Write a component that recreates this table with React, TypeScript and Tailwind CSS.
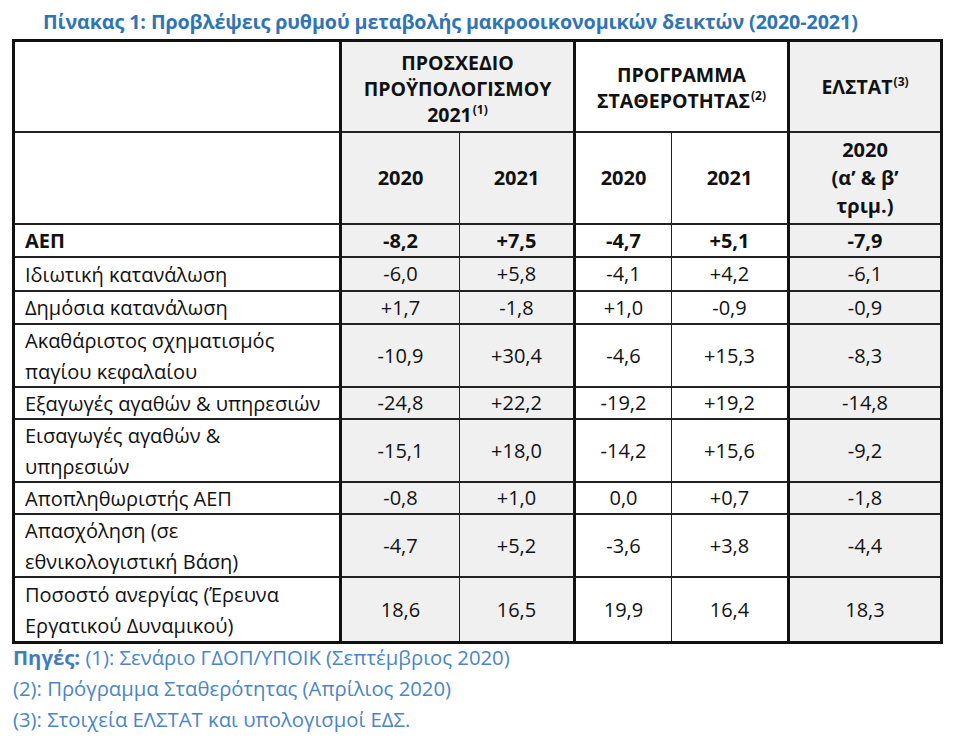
import React from "react";

type Row = { label: string[]; values: string[]; bold?: boolean; h: string };

const rows: Row[] = [
  { label: ["ΑΕΠ"], values: ["-8,2", "+7,5", "-4,7", "+5,1", "-7,9"], bold: true, h: "h-[33px]" },
  { label: ["Ιδιωτική κατανάλωση"], values: ["-6,0", "+5,8", "-4,1", "+4,2", "-6,1"], h: "h-[34px]" },
  { label: ["Δημόσια κατανάλωση"], values: ["+1,7", "-1,8", "+1,0", "-0,9", "-0,9"], h: "h-[33px]" },
  { label: ["Ακαθάριστος σχηματισμός", "παγίου κεφαλαίου"], values: ["-10,9", "+30,4", "-4,6", "+15,3", "-8,3"], h: "h-[63px]" },
  { label: ["Εξαγωγές αγαθών & υπηρεσιών"], values: ["-24,8", "+22,2", "-19,2", "+19,2", "-14,8"], h: "h-[32px]" },
  { label: ["Εισαγωγές αγαθών &", "υπηρεσιών"], values: ["-15,1", "+18,0", "-14,2", "+15,6", "-9,2"], h: "h-[63px]" },
  { label: ["Αποπληθωριστής ΑΕΠ"], values: ["-0,8", "+1,0", "0,0", "+0,7", "-1,8"], h: "h-[32px]" },
  { label: ["Απασχόληση (σε", "εθνικολογιστική Βάση)"], values: ["-4,7", "+5,2", "-3,6", "+3,8", "-4,4"], h: "h-[63px]" },
  { label: ["Ποσοστό ανεργίας (Έρευνα", "Εργατικού Δυναμικού)"], values: ["18,6", "16,5", "19,9", "16,4", "18,3"], h: "h-[63px]" },
];

// border + background for each of the 5 value columns
const valueCol = [
  "bg-[#f0f0f0] border-r border-r-[#222]",
  "bg-[#f0f0f0] border-r-[3px] border-r-[#111]",
  "bg-white border-r border-r-[#222]",
  "bg-white border-r-[3px] border-r-[#111]",
  "bg-[#f0f0f0]",
];

const Sup = ({ n }: { n: number }) => (
  <sup className="text-[12px] font-bold relative -top-[8px] ml-[1px]">({n})</sup>
);

export default function App() {
  return (
    <div className="min-h-screen bg-white text-[#111]" style={{ fontFamily: '"Open Sans", "Noto Sans", sans-serif' }}>
      <div className="pl-[43px] pt-[10px] h-[39px] text-[19.7px] font-bold text-[#2f74b5] leading-[24px] tracking-[-0.1px]">
        Πίνακας 1: Προβλέψεις ρυθμού μεταβολής μακροοικονομικών δεικτών (2020-2021)
      </div>

      <div className="ml-[12px] w-[931px] border-[3px] border-[#111]">
        <div className="grid grid-cols-[327px_118px_116px_96px_118px_150px] text-[19.5px] font-bold">
          {/* header row 1 */}
          <div className="h-[91px] border-r-[3px] border-r-[#111] border-b-2 border-b-[#222]" />
          <div className="col-span-2 h-[91px] bg-[#f0f0f0] border-r-[3px] border-r-[#111] border-b-2 border-b-[#222] flex flex-col items-center justify-center leading-[26px] pt-[4px]">
            <span>ΠΡΟΣΧΕΔΙΟ</span>
            <span>ΠΡΟΫΠΟΛΟΓΙΣΜΟΥ</span>
            <span>
              2021<Sup n={1} />
            </span>
          </div>
          <div className="col-span-2 h-[91px] bg-white border-r-[3px] border-r-[#111] border-b-2 border-b-[#222] flex flex-col items-center justify-center leading-[26px] pt-[2px]">
            <span>ΠΡΟΓΡΑΜΜΑ</span>
            <span>
              ΣΤΑΘΕΡΟΤΗΤΑΣ<Sup n={2} />
            </span>
          </div>
          <div className="h-[91px] bg-[#f0f0f0] border-b-2 border-b-[#222] flex items-center justify-center">
            <span>
              ΕΛΣΤΑΤ<Sup n={3} />
            </span>
          </div>

          {/* header row 2 */}
          <div className="h-[92px] border-r-[3px] border-r-[#111] border-b-2 border-b-[#222]" />
          {["2020", "2021", "2020", "2021"].map((y, i) => (
            <div key={i} className={`h-[92px] border-b-2 border-b-[#222] flex items-center justify-center text-[20px] ${valueCol[i]}`}>
              {y}
            </div>
          ))}
          <div className="h-[92px] bg-[#f0f0f0] border-b-2 border-b-[#222] flex flex-col items-center justify-center leading-[28px] text-[20px]">
            <span>2020</span>
            <span>(α’ &amp; β’</span>
            <span>τριμ.)</span>
          </div>

          {/* data rows */}
          {rows.map((r, ri) => {
            const last = ri === rows.length - 1;
            const rowBorder = last ? "" : "border-b-2 border-b-[#222]";
            return (
              <React.Fragment key={ri}>
                <div
                  className={`${r.h} ${rowBorder} border-r-[3px] border-r-[#111] pl-[10px] flex flex-col justify-center leading-[31px] text-[20px] ${r.bold ? "font-bold" : "font-normal"}`}
                >
                  {r.label.map((l, li) => (
                    <span key={li}>{l}</span>
                  ))}
                </div>
                {r.values.map((v, vi) => (
                  <div
                    key={vi}
                    className={`${r.h} ${rowBorder} ${valueCol[vi]} flex items-center justify-center text-[20px] ${r.bold ? "font-bold" : "font-normal"}`}
                  >
                    {v}
                  </div>
                ))}
              </React.Fragment>
            );
          })}
        </div>
      </div>

      <div className="pl-[13px] -mt-[2px] text-[20.3px] leading-[31px] text-[#4a86c6]">
        <p>
          <span className="font-bold text-[#3f7cc0]">Πηγές:</span> (1): Σενάριο ΓΔΟΠ/ΥΠΟΙΚ (Σεπτέμβριος 2020)
        </p>
        <p>(2): Πρόγραμμα Σταθερότητας (Απρίλιος 2020)</p>
        <p>(3): Στοιχεία ΕΛΣΤΑΤ και υπολογισμοί ΕΔΣ.</p>
      </div>
    </div>
  );
}
